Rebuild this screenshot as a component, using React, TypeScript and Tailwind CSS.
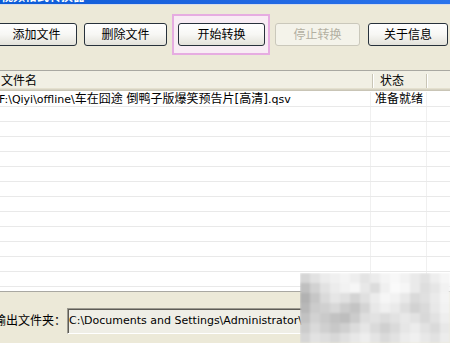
import React from "react";

const CJK = '"DejaVu Sans", "Noto Sans CJK SC", sans-serif';

// pixelated watermark in the bottom right corner
const noise: number[][] = [
  [214, 226, 236, 240, 244, 238, 228, 236, 244, 248, 242, 234, 226, 238, 246],
  [192, 210, 226, 236, 242, 246, 232, 220, 240, 250, 246, 234, 222, 230, 242],
  [178, 198, 218, 230, 224, 212, 224, 236, 246, 242, 232, 218, 224, 234, 244],
  [184, 204, 208, 216, 204, 196, 212, 232, 240, 234, 222, 210, 218, 232, 242],
  [194, 210, 202, 194, 190, 204, 222, 226, 220, 226, 232, 226, 216, 226, 238],
  [204, 218, 208, 200, 208, 220, 230, 218, 208, 218, 230, 236, 226, 218, 232],
  [214, 226, 222, 216, 224, 232, 238, 228, 218, 226, 236, 240, 232, 226, 236],
];

function XpButton({
  label,
  className,
  disabled,
}: {
  label: string;
  className?: string;
  disabled?: boolean;
}) {
  return (
    <button
      className={
        "h-[23px] shrink-0 rounded-[3px] border text-[12px] leading-none flex items-center justify-center " +
        (disabled
          ? "border-[#CAC8BB] bg-[#F4F3EA] text-[#B3B0A2] "
          : "border-[#27313B] bg-gradient-to-b from-white via-[#F7F7F4] to-[#E3E2DA] text-black ") +
        (className ?? "")
      }
    >
      {label}
    </button>
  );
}

export default function App() {
  const rows = Array.from({ length: 13 });

  return (
    <div
      className="relative w-[450px] h-[343px] overflow-hidden bg-[#ECE9D8] flex flex-col"
      style={{ fontFamily: CJK }}
    >
      {/* Title bar, mostly cropped */}
      <div className="h-[4px] overflow-hidden bg-gradient-to-r from-[#0B5BD7] via-[#1F66E0] to-[#2A74EC]">
        <div className="-mt-[10px] pl-[1px] text-[12px] font-bold text-white leading-[14px] whitespace-nowrap">
          视频格式转换器
        </div>
      </div>
      <div className="h-[1px] bg-[#D6DCEA]" />

      {/* Toolbar */}
      <div className="h-[65px] pt-[18px] flex items-start -ml-[4px]">
        <XpButton label="添加文件" className="w-[81px]" />
        <XpButton label="删除文件" className="w-[83px] ml-[7px]" />
        <div className="relative ml-[11px]">
          <span className="absolute -left-[6px] -right-[5px] -top-[9px] -bottom-[9px] border-2 border-[#E6ACE1] bg-[#F8ECF4]" />
          <XpButton label="开始转换" className="relative w-[87px]" />
        </div>
        <XpButton label="停止转换" className="w-[85px] ml-[10px]" disabled />
        <XpButton label="关于信息" className="w-[80px] ml-[8px]" />
      </div>

      {/* File list */}
      <div className="h-[222px] border-t border-b border-[#A9A8A2] bg-white flex flex-col overflow-hidden">
        <div className="h-[20px] shrink-0 flex items-center bg-[#F1EFE4] shadow-[inset_0_-1px_0_#C9C5B6,inset_0_-2px_0_#D6D2C2,inset_0_-3px_0_#E4E0CF] text-[12px] text-black">
          <div className="w-[372px] pl-[1px] pb-[1px]">文件名</div>
          <div className="w-[2px] h-[14px] border-l border-[#C9C5B6] border-r-white border-r" />
          <div className="w-[52px] pl-[6px] pb-[1px]">状态</div>
          <div className="w-[2px] h-[14px] border-l border-[#C9C5B6] border-r-white border-r" />
          <div className="flex-1" />
        </div>
        <div className="h-[1px] shrink-0" />
        {rows.map((_, i) => (
          <div
            key={i}
            className="h-[15px] shrink-0 flex border-b border-[#E9E9E9] text-black"
          >
            <div className="w-[372px] border-r border-[#F0F0F0] -ml-[1px] text-[11px] leading-[14px] whitespace-nowrap overflow-hidden">
              {i === 0 && (
                <>
                  F:\Qiyi\offline\
                  <span className="text-[12px]">车在囧途 倒鸭子版爆笑预告片[高清]</span>
                  .qsv
                </>
              )}
            </div>
            <div className="w-[56px] border-r border-[#F0F0F0] pl-[4px] text-[12px] leading-[14px]">
              {i === 0 && "准备就绪"}
            </div>
            <div className="flex-1" />
          </div>
        ))}
      </div>

      {/* Output folder */}
      <div className="flex-1 flex items-start pt-[16px]">
        <div className="-ml-[6px] w-[73px] shrink-0 h-[26px] flex items-center text-[12px] text-black whitespace-nowrap">
          输出文件夹：
        </div>
        <div className="w-[260px] shrink-0 h-[26px] border border-t-[#9C9A90] border-l-[#9C9A90] border-b-white border-r-white shadow-[inset_1px_1px_0_#5E5C55] bg-[#EFEEE6] flex items-center pl-[1px] text-[11px] text-black whitespace-nowrap overflow-hidden">
          C:\Documents and Settings\Administrator\
        </div>
      </div>

      {/* watermark */}
      <div className="absolute left-[300px] top-[273px] w-[150px] h-[70px] overflow-hidden">
        <div className="grid grid-cols-[repeat(15,10px)] grid-rows-[repeat(7,10px)] blur-[1px]">
          {noise.flat().map((v, i) => (
            <div key={i} style={{ backgroundColor: `rgb(${v},${v},${v})` }} />
          ))}
        </div>
      </div>
    </div>
  );
}
